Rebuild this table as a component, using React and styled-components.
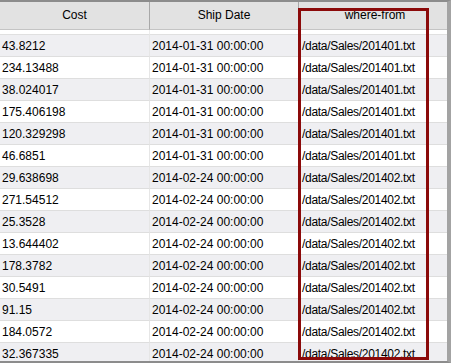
import React from 'react'
import styled, { createGlobalStyle } from 'styled-components'

const rows = [
	['43.8212', '2014-01-31 00:00:00', '/data/Sales/201401.txt'],
	['234.13488', '2014-01-31 00:00:00', '/data/Sales/201401.txt'],
	['38.024017', '2014-01-31 00:00:00', '/data/Sales/201401.txt'],
	['175.406198', '2014-01-31 00:00:00', '/data/Sales/201401.txt'],
	['120.329298', '2014-01-31 00:00:00', '/data/Sales/201401.txt'],
	['46.6851', '2014-01-31 00:00:00', '/data/Sales/201401.txt'],
	['29.638698', '2014-02-24 00:00:00', '/data/Sales/201402.txt'],
	['271.54512', '2014-02-24 00:00:00', '/data/Sales/201402.txt'],
	['25.3528', '2014-02-24 00:00:00', '/data/Sales/201402.txt'],
	['13.644402', '2014-02-24 00:00:00', '/data/Sales/201402.txt'],
	['178.3782', '2014-02-24 00:00:00', '/data/Sales/201402.txt'],
	['30.5491', '2014-02-24 00:00:00', '/data/Sales/201402.txt'],
	['91.15', '2014-02-24 00:00:00', '/data/Sales/201402.txt'],
	['184.0572', '2014-02-24 00:00:00', '/data/Sales/201402.txt'],
	['32.367335', '2014-02-24 00:00:00', '/data/Sales/201402.txt'],
]

const GlobalStyle = createGlobalStyle`
	body {
		margin: 0;
		font-family: "Liberation Sans", Arial, sans-serif;
		background: #ffffff;
	}
`

export default function App() {
	return (
		<>
			<GlobalStyle />
			<Frame>
				<Grid>
					<HeadCell>Cost</HeadCell>
					<HeadCell>Ship Date</HeadCell>
					<HeadCell last>where-from</HeadCell>
					<Gap />
					<Gap />
					<Gap last />
					{rows.map((row, i) => (
						row.map((value, j) => (
							<Cell key={`${i}-${j}`} shaded={i % 2 === 0} last={j === 2}>{value}</Cell>
						))
					))}
				</Grid>
				<Highlight />
			</Frame>
		</>
	)
}

const Frame = styled.div`
	position: relative;
	width: 451px;
	height: 363px;
	box-sizing: border-box;
	border-top: 2px solid #8c8c8c;
	border-right: 4px solid #a3a3a3;
	border-bottom: 2px solid #8c8c8c;
	overflow: hidden;
	background: #ffffff;
`
const Grid = styled.div`
	display: grid;
	grid-template-columns: 150px 149px 1fr;
	grid-auto-rows: 22px;
	grid-template-rows: 28px 5px;
`
const HeadCell = styled.div`
	display: flex;
	align-items: center;
	justify-content: center;
	background: #e2e2e2;
	border-right: ${({ last }) => (last ? 'none' : '1px solid #a8a8a8')};
	border-bottom: 1px solid #c4c4c4;
	font-size: 12px;
	color: #000000;
	padding-bottom: 1px;
	padding-left: ${({ last }) => (last ? '4px' : '0')};
`
const Gap = styled.div`
	background: #ffffff;
	border-right: ${({ last }) => (last ? 'none' : '1px solid #ececec')};
	border-bottom: 1px solid #e0e0e0;
`
const Cell = styled.div`
	display: flex;
	align-items: center;
	padding-left: ${({ last }) => (last ? '3px' : '2px')};
	box-sizing: border-box;
	background: ${({ shaded }) => (shaded ? '#efeff2' : '#ffffff')};
	border-right: ${({ last }) => (last ? 'none' : '1px solid #e6e6e6')};
	border-bottom: 1px solid #dedede;
	font-size: 12px;
	letter-spacing: ${({ last }) => (last ? '-0.3px' : '0')};
	color: #000000;
	white-space: nowrap;
	overflow: hidden;
`
const Highlight = styled.div`
	position: absolute;
	left: 298px;
	top: 6px;
	width: 131px;
	height: 352px;
	box-sizing: border-box;
	border: 3px solid #8b0a0a;
	pointer-events: none;
`
